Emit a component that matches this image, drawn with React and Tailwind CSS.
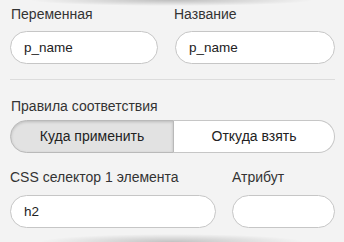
export default function App() {
  return (
    <div className="w-[344px] h-[242px] overflow-hidden bg-[#f3f3f3] flex flex-col font-['Helvetica_Neue','Liberation_Sans',Arial,sans-serif] text-[#333]">
      {/* top shadow */}
      <div className="h-[6px] mx-[30px] bg-[radial-gradient(ellipse_50%_100%_at_50%_0%,rgba(0,0,0,0.22),rgba(0,0,0,0)_100%)]" />

      <div className="px-[10px] pr-[9px] flex flex-col">
        <div className="grid grid-cols-[148px_160px] gap-x-[17px]">
          <label className="text-[14px] leading-[16px] pl-[1px]">Переменная</label>
          <label className="text-[14px] leading-[16px] -ml-[1px]">Название</label>
          <input
            defaultValue="p_name"
            className="mt-[9px] h-[33px] rounded-full border border-[#c6c6c6] bg-white px-[13px] text-[13.5px] text-[#222] outline-none"
          />
          <input
            defaultValue="p_name"
            className="mt-[9px] h-[33px] rounded-full border border-[#c6c6c6] bg-white px-[13px] text-[13.5px] text-[#222] outline-none"
          />
        </div>

        <div className="mt-[15px] h-px bg-[#dcdcdc]" />

        <div className="mt-[18px] text-[14px] leading-[16px] pl-[1px]">Правила соответствия</div>

        <div className="mt-[6px] flex h-[33px]">
          <button className="w-[164px] rounded-l-full border border-[#b9b9b9] bg-[#e2e2e2] shadow-[inset_0_1px_3px_rgba(0,0,0,0.18)] text-[14px] text-[#222]">
            Куда применить
          </button>
          <button className="flex-1 rounded-r-full border border-l-0 border-[#c6c6c6] bg-white text-[14px] text-[#222]">
            Откуда взять
          </button>
        </div>

        <div className="mt-[16px] grid grid-cols-[206px_103px] gap-x-[16px]">
          <label className="text-[14px] leading-[16px]">CSS селектор 1 элемента</label>
          <label className="text-[14px] leading-[16px]">Атрибут</label>
          <input
            defaultValue="h2"
            className="mt-[10px] h-[33px] rounded-full border border-[#c6c6c6] bg-white px-[13px] text-[13.5px] text-[#222] outline-none"
          />
          <input
            defaultValue=""
            className="mt-[10px] h-[33px] rounded-full border border-[#c6c6c6] bg-white px-[13px] text-[13.5px] text-[#222] outline-none"
          />
        </div>
      </div>

      <div className="mt-auto h-[8px] mx-[40px] bg-[radial-gradient(ellipse_50%_100%_at_50%_100%,rgba(0,0,0,0.2),rgba(0,0,0,0)_100%)]" />
    </div>
  )
}
